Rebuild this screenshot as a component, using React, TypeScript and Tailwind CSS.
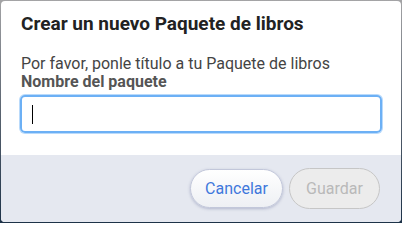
import { useState } from 'react';

export default function App() {
  const [name, setName] = useState('');

  return (
    <div className="w-[402px] h-[223px] p-px bg-gradient-to-b from-[#a4a4a6] via-[#5a6470] to-[#1d3248] font-['Roboto','Liberation_Sans',sans-serif]">
      <div className="flex flex-col h-full bg-white rounded-[4px] overflow-hidden">
        {/* Header */}
        <div className="px-5 pt-[11px]">
          <h2 className="text-[19px] leading-6 font-bold text-[#222]">Crear un nuevo Paquete de libros</h2>
        </div>

        {/* Body */}
        <div className="pl-[19px] pr-[19px] pt-[19px] pb-[22px]">
          <p className="pl-px text-[16px] leading-[18px] text-[#444]">Por favor, ponle título a tu Paquete de libros</p>
          <label htmlFor="bundle-name" className="block pl-px text-[16px] leading-[18px] font-bold text-[#555]">
            Nombre del paquete
          </label>
          <div className="mt-[4px] h-[38px] rounded-[5px] border-2 border-[#6cb0f5] ring-1 ring-[#b9dafb] flex items-center pl-[10px]">
            <span className="w-px h-[19px] bg-black" />
            <input
              id="bundle-name"
              value={name}
              onChange={(e) => setName(e.target.value)}
              className="sr-only"
            />
          </div>
        </div>

        {/* Buttons */}
        <div className="flex-1 flex items-center justify-end gap-[6px] pr-[21px] bg-[#e5e8f0]">
          <button className="h-[39px] w-[93px] rounded-full border border-[#c2c7da] bg-gradient-to-b from-white to-[#eef0f4] shadow-[0_1px_3px_rgba(80,90,140,0.35)] text-[16px] text-[#3f78dc]">
            Cancelar
          </button>
          <button disabled className="h-[41px] w-[91px] rounded-full border border-[#c6c6c6] bg-[#ececec] text-[16px] text-[#b9b9b9]">
            Guardar
          </button>
        </div>
      </div>
    </div>
  );
}
